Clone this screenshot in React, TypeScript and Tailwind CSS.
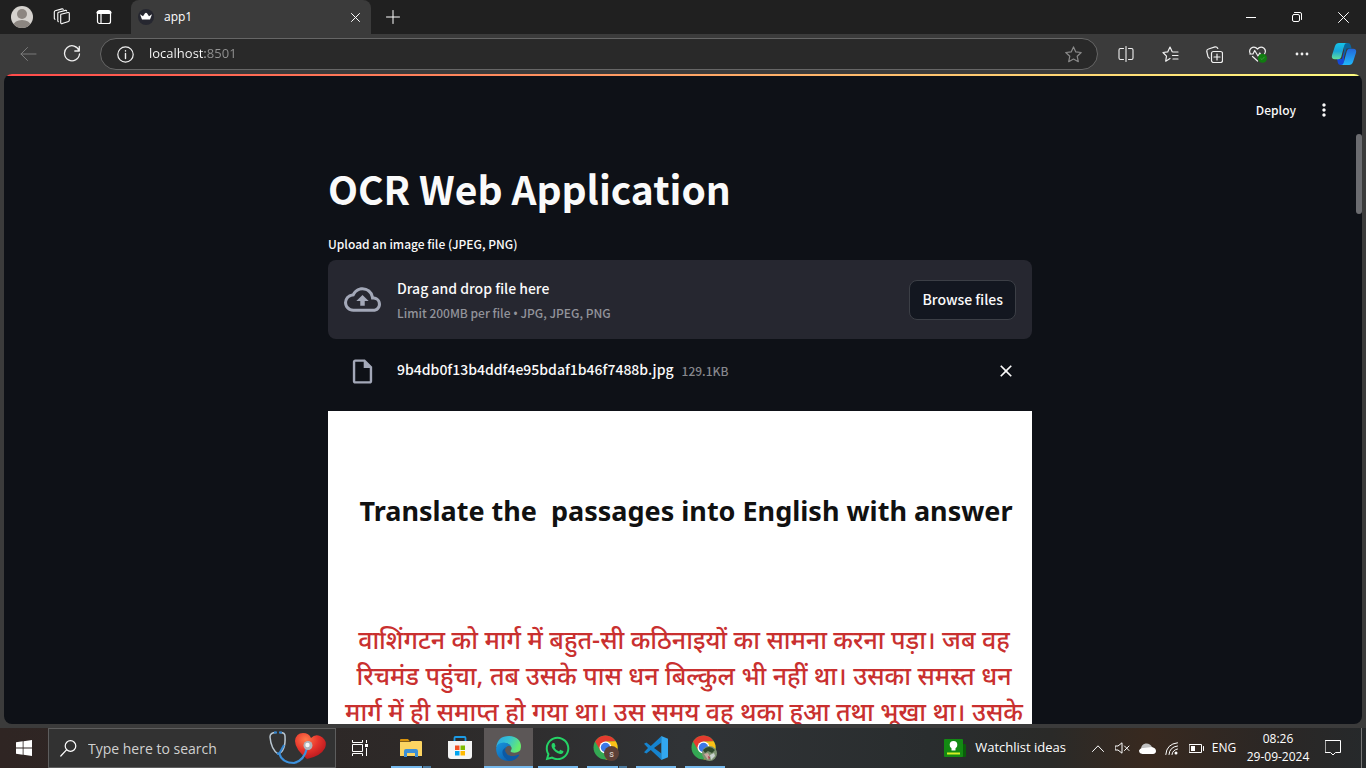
import { useRef, type ReactNode } from "react";
import { MdOutlineCloudUpload, MdOutlineInsertDriveFile, MdMoreVert, MdClose } from "react-icons/md";
import { FaWhatsapp } from "react-icons/fa";

const line = { fill: "none", stroke: "currentColor", strokeLinecap: "round", strokeLinejoin: "round" } as const;

function IconButton({ label, className, children }: { label: string; className: string; children: ReactNode }) {
  return (
    <button type="button" aria-label={label} className={`flex shrink-0 items-center justify-center ${className}`}>
      {children}
    </button>
  );
}

function TitleBar() {
  return (
    <header className="flex h-[34px] shrink-0 items-stretch bg-[#202020] text-white">
      <IconButton label="Profile" className="w-11">
        <svg width="24" height="24" viewBox="0 0 24 24">
          <defs>
            <clipPath id="face"><circle cx="12" cy="12" r="11" /></clipPath>
          </defs>
          <circle cx="12" cy="12" r="11" fill="#d5d2ce" />
          <g clipPath="url(#face)" fill="#8c8681">
            <circle cx="12" cy="9" r="5" />
            <ellipse cx="12" cy="20.500" rx="8.500" ry="5.500" />
          </g>
        </svg>
      </IconButton>
      <IconButton label="Workspaces" className="w-9">
        <svg width="18" height="18" viewBox="0 0 18 18" {...line} strokeWidth="1.100">
          <path d="M8 6.300l7-1.800q1.300-.2 1.300 1v6.800q0 .8-.8 1.100l-6.300 2.200q-1.500.4-1.500-1V7.300q0-.8.3-1z" />
          <path d="M5.300 13.700q-.5-.3-.5-1V5.400q0-.8.8-1.100l6.900-1.900q.9-.2 1.200.6" />
          <path d="M2 11.300q-.7-.3-.7-1.100V4q0-.9.9-1.200L9 .9q.9-.2 1.200.5" />
        </svg>
      </IconButton>
      <IconButton label="Tab actions" className="w-12">
        <svg width="16" height="16" viewBox="0 0 16 16" {...line} strokeWidth="1.200">
          <rect x="1.500" y="1.500" width="13" height="13" rx="2" />
          <path d="M2 3.500h12" strokeWidth="3" />
          <path d="M5 5v9" />
        </svg>
      </IconButton>
      <div role="tablist" className="ml-[3px] flex w-60 items-center rounded-t-lg bg-[#3b3b3b] pl-[7px] pr-2">
        <svg width="16" height="16" viewBox="0 0 16 16" className="shrink-0">
          <circle cx="8" cy="8" r="8" fill="#262730" />
          <path d="M2 5.200l3 2 2-3q1-1 2 0l2 3 3-2-2 5.300H4z" fill="#fff" />
        </svg>
        <button type="button" role="tab" aria-selected="true" className="flex-1 pl-[10px] text-left font-['Open_Sans',sans-serif] text-[12px]">app1</button>
        <IconButton label="Close tab" className="size-4">
          <svg width="9" height="9" viewBox="0 0 9 9" {...line}><path d="M.5.5l8 8M8.500.5l-8 8" /></svg>
        </IconButton>
      </div>
      <IconButton label="New tab" className="w-11">
        <svg width="14" height="14" viewBox="0 0 14 14" {...line}><path d="M7 .5v13M.5 7h13" /></svg>
      </IconButton>
      <div className="flex-1" />
      <IconButton label="Minimize" className="w-[46px]">
        <svg width="10" height="10" viewBox="0 0 10 10" {...line}><path d="M0 5.500h10" /></svg>
      </IconButton>
      <IconButton label="Restore" className="w-[46px]">
        <svg width="10" height="10" viewBox="0 0 10 10" {...line}>
          <rect x=".5" y="2.500" width="7" height="7" rx="1.500" />
          <path d="M2.500.5H8q1.500 0 1.500 1.500v5.500" />
        </svg>
      </IconButton>
      <IconButton label="Close window" className="w-[46px]">
        <svg width="11" height="11" viewBox="0 0 11 11" {...line}><path d="M.5.5l10 10M10.500.5l-10 10" /></svg>
      </IconButton>
    </header>
  );
}

function Toolbar() {
  return (
    <nav aria-label="Browser" className="flex h-10 shrink-0 items-center bg-[#3b3b3b] pr-[2px] text-[#f0f0f0]">
      <IconButton label="Back" className="ml-[6px] size-11 text-[#7b7b7b]">
        <svg width="17" height="16" viewBox="0 0 17 16" {...line}><path d="M16 8H1M7.500 1.500L1 8l6.500 6.500" /></svg>
      </IconButton>
      <IconButton label="Refresh" className="size-11">
        <svg width="18" height="18" viewBox="0 0 18 18" {...line} strokeWidth="1.300">
          <path d="M16.200 6A7.500 7.500 0 1 0 16.500 9M16.300 1.500V6h-4.500" />
        </svg>
      </IconButton>
      <div className="ml-[6px] flex h-8 flex-1 items-center rounded-full border border-[#666] bg-[#292929] pl-4 pr-4">
        <svg width="17" height="17" viewBox="0 0 17 17" {...line} strokeWidth="1.200" className="shrink-0">
          <circle cx="8.500" cy="8.500" r="7.700" />
          <path d="M8.500 7.500v5M8.500 4.800v.3" strokeWidth="1.400" />
        </svg>
        <input
          aria-label="Address"
          defaultValue="localhost:8501"
          className="ml-[15px] min-w-0 flex-1 bg-[linear-gradient(to_right,#ffffff_56px,#949494_56px)] bg-clip-text font-['Open_Sans',sans-serif] text-[13px] text-transparent outline-none"
        />
        <IconButton label="Add to favorites" className="size-4 text-[#8a8a8a]">
          <svg width="17" height="17" viewBox="0 0 17 17" {...line} strokeWidth="1.200" className="shrink-0">
            <path d="M8.500.9l2.300 5 5.400.6-4 3.700 1.100 5.500-4.800-2.700-4.800 2.700 1.100-5.500-4-3.700 5.400-.6z" />
          </svg>
        </IconButton>
      </div>
      <IconButton label="Split screen" className="ml-[6px] w-11">
        <svg width="16" height="16" viewBox="0 0 16 16" {...line} strokeWidth="1.100">
          <path d="M8 .5v15M5.500 2.500h-3Q1 2.500 1 4v8q0 1.500 1.500 1.500h3M10.500 2.500h3Q15 2.500 15 4v8q0 1.500-1.500 1.500h-3" />
        </svg>
      </IconButton>
      <IconButton label="Favorites" className="w-11">
        <svg width="17" height="17" viewBox="0 0 17 17" {...line} strokeWidth="1.200">
          <path d="M8 12.500l-4.300 2.700.8-5L1 6.500l4.700-.6L8 1l2.200 4.700M11 6h5M10.500 9.500H16M11 13h5" />
        </svg>
      </IconButton>
      <IconButton label="Collections" className="w-11">
        <svg width="17" height="17" viewBox="0 0 17 17" {...line} strokeWidth="1.200">
          <rect x="5.500" y="5.500" width="11" height="11" rx="2" />
          <path d="M11 8v6M8 11h6M3.500 12.200q-1.200-.2-1.500-1.500L.8 5.500Q.5 3.500 2.500 3L9 .9q2-.3 2.800 1.600" />
        </svg>
      </IconButton>
      <IconButton label="Browser essentials" className="w-11">
        <svg width="18" height="17" viewBox="0 0 18 17" {...line} strokeWidth="1.200">
          <path d="M1.500 8Q-.5 4.500 2 2.200 5.500-.5 8.500 3 11.500-.5 15 2.200 17.500 4.500 15.500 8M3.500 10.500l5 4.500M.8 8H4l1.700-3.500L9 10l1.800-3 1 1.500H15" />
          <circle cx="13.500" cy="12.300" r="4.500" fill="#107c10" stroke="none" />
          <path d="M11.800 12.500l1.200 1.100 2.300-2.500" stroke="#3e963e" strokeWidth="1" />
        </svg>
      </IconButton>
      <IconButton label="Settings and more" className="w-11">
        <svg width="14" height="4" viewBox="0 0 14 4" fill="currentColor">
          <circle cx="2" cy="2" r="1.400" /><circle cx="7" cy="2" r="1.400" /><circle cx="12" cy="2" r="1.400" />
        </svg>
      </IconButton>
      <IconButton label="Copilot" className="w-10">
        <svg width="26" height="24" viewBox="0 0 26 24">
          <defs>
            <linearGradient id="cpA" x1="0" y1="0" x2="0" y2="1"><stop stopColor="#14c4e8" /><stop offset=".5" stopColor="#1aa3d8" /><stop offset="1" stopColor="#62e09a" /></linearGradient>
            <linearGradient id="cpB" x1="0" y1="1" x2="0" y2="0"><stop stopColor="#20b8fa" /><stop offset="1" stopColor="#2366d9" /></linearGradient>
          </defs>
          <path d="M13 1h4q2 0 2.600 2l1 3.500h-5L13 15z" fill="#0b659b" />
          <path d="M13 23H9.500q-2 0-2.600-2L6 17h5l2-8z" fill="#1449d7" />
          <path d="M8 1h8q-2 0-2.600 2l-3.200 12q-.7 2.300-3 2.300H4q-4 0-3-4L4 4q1-3 4-3z" fill="url(#cpA)" />
          <path d="M18 23h-8q2 0 2.600-2l3.200-12q.7-2.300 3-2.300H22q4 0 3 4L22 20q-1 3-4 3z" fill="url(#cpB)" />
        </svg>
      </IconButton>
    </nav>
  );
}

function Uploader() {
  const picker = useRef<HTMLInputElement>(null);
  return (
    <section>
      <label htmlFor="image-upload" className="block text-[12px] leading-5">Upload an image file (JPEG, PNG)</label>
      <input ref={picker} id="image-upload" type="file" accept=".jpg,.jpeg,.png" className="sr-only" />
      <div className="mt-[6px] flex items-center rounded-lg bg-[#262730] p-4">
        <MdOutlineCloudUpload className="size-[37px] shrink-0 text-[#a3a8b8]" />
        <div className="ml-4 flex-1">
          <p className="text-[14px] leading-6">Drag and drop file here</p>
          <p className="mt-[3px] text-[12px] leading-5 text-[#92939a]">Limit 200MB per file <span className="font-['Noto_Sans',sans-serif] leading-none">•</span> JPG, JPEG, PNG</p>
        </div>
        <button type="button" onClick={() => picker.current?.click()} className="h-10 rounded-lg border border-[#3c3f46] bg-[#131720] px-3 text-[14px]">
          Browse files
        </button>
      </div>
      <div className="flex h-16 items-center pl-5 pr-4">
        <MdOutlineInsertDriveFile className="size-[29px] shrink-0 text-[#a3a8b8]" />
        <p className="ml-5 pb-1 text-[14px] leading-6">9b4db0f13b4ddf4e95bdaf1b46f7488b.jpg</p>
        <p className="ml-2 flex-1 text-[12px] text-[#86878c]">129.1KB</p>
        <IconButton label="Remove file" className="size-5"><MdClose className="size-5" /></IconButton>
      </div>
    </section>
  );
}

function Page() {
  return (
    <div className="relative mx-1 mb-1 flex min-h-0 flex-1 overflow-hidden rounded-lg bg-[#0e1117] font-['Noto_Sans_CJK_SC',sans-serif] font-medium text-[#fafafa]">
      <div className="absolute inset-x-0 top-0 h-[2px] bg-[linear-gradient(to_right,#ff4b4b,#fffd80)]" />
      <div className="flex min-w-0 flex-1 flex-col">
        <div className="flex h-15 shrink-0 items-end justify-end pr-[18px]">
          <div className="flex h-12 items-center gap-[14px]">
            <button type="button" className="text-[12px]">Deploy</button>
            <IconButton label="Main menu" className="size-7"><MdMoreVert className="size-5" /></IconButton>
          </div>
        </div>
        <main className="mx-auto w-full max-w-[704px] pt-6">
          <h1 className="text-[39px] font-bold leading-[60px]">OCR Web Application</h1>
          <div className="pt-4"><Uploader /></div>
          <figure className="mt-2 bg-white pl-2 pt-[80px] text-center">
            <p className="whitespace-pre pl-1 font-['Noto_Sans',sans-serif] text-[27px] font-bold leading-10 text-[#111]">Translate the  passages into English with answer</p>
            <p className="whitespace-nowrap pt-[90px] font-['Noto_Sans','Noto_Sans_Devanagari',sans-serif] text-[25px] leading-9 text-[#c9302f]">
              वाशिंगटन को मार्ग में बहुत-सी कठिनाइयों का सामना करना पड़ा। जब वह<br />
              रिचमंड पहुंचा, तब उसके पास धन बिल्कुल भी नहीं था। उसका समस्त धन<br />
              मार्ग में ही समाप्त हो गया था। उस समय वह थका हुआ तथा भूखा था। उसके
            </p>
          </figure>
        </main>
      </div>
      <div className="w-[6px] shrink-0 pt-15"><div className="h-20 rounded-full bg-[#6b6c70]" /></div>
    </div>
  );
}

function EdgeLogo() {
  return (
    <svg width="25" height="25" viewBox="0 0 24 24">
      <defs>
        <linearGradient id="edTop" x1="0" y1="0" x2="1" y2=".4"><stop stopColor="#2aa6e4" /><stop offset=".5" stopColor="#35c1d4" /><stop offset="1" stopColor="#66eb6e" /></linearGradient>
        <linearGradient id="edLow" x1="0" y1="0" x2="1" y2="1"><stop stopColor="#1795dd" /><stop offset="1" stopColor="#0b4fa0" /></linearGradient>
      </defs>
      <path d="M.2 11Q1.500 0 12.500 0 24 .8 24 10.500q-.3 5.500-6.300 5.500-5 0-3.200-2.500 1.300-2-.5-4Q11 6 6.500 7 2 8 .2 11z" fill="url(#edTop)" />
      <path d="M.1 12Q1 6.300 7.500 6.200q5 .2 7 3.800-2.500-1.500-4.500.5-3.500 4 1 7.500 5 3 10.500.1.900-.4.600.5Q18.500 24 12 24 .3 23.300.1 12z" fill="url(#edLow)" />
      <path d="M9.800 10.500Q3.500 14 8 20.500q2 2.700 5 3.300 6-.4 9.200-5.500.1-.7-.6-.3-5.600 2.900-10.600-.1-4-3.400-1.200-7.400z" fill="#0c59a4" />
    </svg>
  );
}

function ChromeLogo({ badge }: { badge: ReactNode }) {
  return (
    <svg width="27" height="27" viewBox="0 0 27 27">
      <circle cx="12.500" cy="12.500" r="12" fill="#34a853" />
      <path d="M2.100 6.500A12 12 0 0 1 22.900 6.500H12.500L7.300 15.500z" fill="#e33b2e" />
      <path d="M22.900 6.500A12 12 0 0 1 12.500 24.500L17.700 15.500 17 7z" fill="#fbc116" />
      <path d="M12.500 6.500h10.400l-5 3z" fill="#fbc116" />
      <circle cx="12.500" cy="12.500" r="6" fill="#fff" />
      <circle cx="12.500" cy="12.500" r="4.700" fill="#3b78e7" />
      {badge}
    </svg>
  );
}

function TaskApp({ label, active, bar = "none", children }: { label: string; active?: boolean; bar?: "none" | "single" | "stack" | "full"; children: ReactNode }) {
  return (
    <button type="button" aria-label={label} className={`flex w-[49px] flex-col items-center ${active ? "bg-[#5c5757]" : ""}`}>
      <span className="flex flex-1 items-center pt-[2px]">{children}</span>
      {bar === "none" && <span className="h-[2px]" />}
      {bar === "full" && <span className="h-[2px] w-full bg-[#76b9ed]" />}
      {bar === "single" && <span className="h-[2px] w-10 bg-[#76b9ed]" />}
      {bar === "stack" && <span className="flex h-[2px] w-10 gap-px"><span className="flex-1 bg-[#76b9ed]" /><span className="w-2 bg-[#4c7ba0]" /></span>}
    </button>
  );
}

function Taskbar() {
  return (
    <footer className="flex h-10 shrink-0 items-stretch bg-[linear-gradient(to_right,#2f2523,#2d2928_30%,#303336_50%,#292d2e_68%,#2a2a28_77%,#38291f_84%,#2b2725_93%,#26292b)] font-['Open_Sans',sans-serif] text-white">
      <IconButton label="Start" className="w-12">
        <svg width="16" height="16" viewBox="0 0 16 16" fill="#fff"><path d="M0 2.200L6.700 1.300V7.600H0zM7.500 1.200L16 0v7.600H7.500zM0 8.400h6.700v6.300L0 13.800zM7.500 8.400H16V16l-8.500-1.200z" /></svg>
      </IconButton>
      <div className="flex w-72 items-center border border-[#5d5d5d] bg-[#323232] pl-[11px] pr-2">
        <svg width="17" height="17" viewBox="0 0 17 17" {...line} strokeWidth="1.200" className="shrink-0"><circle cx="10.500" cy="6" r="5.300" /><path d="M6.500 9.800L.8 16" /></svg>
        <input type="search" aria-label="Search" placeholder="Type here to search" className="ml-[11px] min-w-0 flex-1 text-[14px] outline-none placeholder:text-[#d0d0d0]" />
        <svg width="58" height="34" viewBox="0 0 58 34" fill="none" className="shrink-0">
          <defs><radialGradient id="heart" cx=".35" cy=".25" r=".8"><stop stopColor="#ff7a4a" /><stop offset=".5" stopColor="#e7352c" /><stop offset="1" stopColor="#b3151d" /></radialGradient></defs>
          <path d="M38 28Q26 18 26 10 27 2 34 2q6 0 8 5 4-4 9-2 8 4 5 12-4 8-18 11z" fill="url(#heart)" />
          <path d="M7 1.500Q1 1.500 1 6q1 12 8 17 8-3 7-18 0-3.500-5-3.500" stroke="#b9c6d0" strokeWidth="1.500" />
          <path d="M5 1.500h3M10 1.500h3M8 22l2 1 5-9" stroke="#3285d0" strokeWidth="2" />
          <path d="M10 22q3 10 15 10 10-2 13-15" stroke="#3c91dd" strokeWidth="2.200" />
          <circle cx="39" cy="14.500" r="4.500" fill="#aeb4ba" /><circle cx="38.500" cy="14" r="2.200" fill="#f6f6f6" />
        </svg>
      </div>
      <IconButton label="Task view" className="w-12">
        <svg width="17" height="16" viewBox="0 0 17 16" {...line} strokeLinecap="butt"><path d="M.5 0v2.500h10V0M.5 16v-2.500h10V16M.5 4.500h10v7H.5zM14.500 0v3M14.500 8v8" /><rect x="13" y="4" width="3" height="3" fill="#fff" stroke="none" /></svg>
      </IconButton>
      <div className="ml-[2px] flex">
        <TaskApp label="File Explorer" bar="stack">
          <svg width="22" height="19" viewBox="0 0 22 19"><path d="M0 1q0-1 1-1h7l2 2.500H0z" fill="#d9930c" /><path d="M0 3h10l1.500-1H21q1 0 1 1v14H0z" fill="#fcd462" /><path d="M4 18v-6q0-2 2-2h10q2 0 2 2v6h-3v-4H7v4z" fill="#3d8fd6" /></svg>
        </TaskApp>
        <TaskApp label="Microsoft Store">
          <svg width="24" height="24" viewBox="0 0 24 24"><path d="M6.500 6V2q0-1 1-1h9q1 0 1 1v4" fill="none" stroke="#1c9be6" strokeWidth="1.800" /><path d="M0 5h24v15q0 3-3 3H3q-3 0-3-3z" fill="#f4f4f4" /><path d="M7 9.500h4.500V14H7z" fill="#f25022" /><path d="M12.500 9.500H17V14h-4.500z" fill="#7fba00" /><path d="M7 15h4.500v4.500H7z" fill="#00a4ef" /><path d="M12.500 15H17v4.500h-4.500z" fill="#ffb900" /></svg>
        </TaskApp>
        <TaskApp label="Microsoft Edge" active bar="full"><EdgeLogo /></TaskApp>
        <TaskApp label="WhatsApp" bar="single"><FaWhatsapp className="size-[27px] text-[#25d366]" /></TaskApp>
        <TaskApp label="Chrome, profile s" bar="stack">
          <ChromeLogo badge={<><circle cx="18.500" cy="18.500" r="7.500" fill="#5d4037" /><text x="18.500" y="22" textAnchor="middle" fontSize="9" fontFamily="Roboto" fill="#e8e2e0">s</text></>} />
        </TaskApp>
        <TaskApp label="Visual Studio Code" bar="single">
          <svg width="24" height="24" viewBox="0 0 24 24"><path d="M17.500 0L6.800 10 2.400 6.600 0 7.700l4 4.300-4 4.300 2.400 1.100L6.800 14l10.700 10V17.500L10 12l7.500-5.500z" fill="#1684cf" /><path d="M17.300 0L24 2.800v18.400L17.300 24z" fill="#32a7f0" /></svg>
        </TaskApp>
        <TaskApp label="Chrome, second profile" bar="single">
          <ChromeLogo badge={<><circle cx="18.500" cy="18.500" r="7.500" fill="#7c9271" /><path d="M12 15q6-6 12 0l-3 3-4-2-3 2z" fill="#2e4a2c" /><path d="M13 19l4-1 2 4-2 3z" fill="#c9a7a0" /><path d="M19 20l4-2 1 3-4 4z" fill="#c9d3cf" /><path d="M17 21l2 1-1 3z" fill="#a63342" /></>} />
        </TaskApp>
      </div>
      <div className="flex-1" />
      <button type="button" className="mr-5 flex items-center gap-[9px] text-[13px]">
        <svg width="22" height="18" viewBox="0 0 22 18"><rect x="15" y="5" width="7" height="13" rx="1" fill="#0a5f0a" /><rect width="19" height="18" rx="1" fill="#138a13" /><circle cx="9.500" cy="5.800" r="3.800" fill="#fff" /><path d="M7.500 8h4v3.500h-4z" fill="#fff" /><path d="M3 14.500h13" stroke="#d4ef24" strokeWidth="2" /></svg>
        Watchlist ideas
      </button>
      <IconButton label="Show hidden icons" className="w-6"><svg width="12" height="7" viewBox="0 0 12 7" {...line}><path d="M.5 6.500L6 .8l5.500 5.700" /></svg></IconButton>
      <IconButton label="Volume muted" className="w-6"><svg width="15" height="12" viewBox="0 0 15 12" {...line}><path d="M.5 4h2.500L7 .8v10.400L3 8H.5zM9.500 4l4.500 4.500M14 4L9.500 8.500" /></svg></IconButton>
      <IconButton label="OneDrive" className="w-[26px]"><svg width="17" height="11" viewBox="0 0 17 11"><path d="M2 6Q2 1.500 6.500.5 11 0 13 4L8 8z" fill="#c2c2c2" /><path d="M3.500 11Q0 10.500 0 7.500 1 4.500 4.500 5L13 4q4 1 4 4 0 2.500-3 3z" fill="#fff" /></svg></IconButton>
      <IconButton label="Wi-Fi" className="w-6"><svg width="14" height="13" viewBox="0 0 14 13" {...line}><path d="M.8 12.500Q1.500 2 12.500.8M4 12.500Q4.500 5 12.500 4M7 12.500Q7.500 8 12.500 7" /><circle cx="11" cy="11" r="1.500" fill="#fff" stroke="none" /></svg></IconButton>
      <IconButton label="Battery" className="w-6"><svg width="15" height="9" viewBox="0 0 15 9" {...line} strokeLinejoin="miter"><path d="M.5.5h12v8H.5zM14.500 2.500v4" /><path d="M2 2h4v5H2z" fill="#fff" stroke="none" /></svg></IconButton>
      <button type="button" className="w-8 text-[12px]">ENG</button>
      <button type="button" className="w-[76px] text-center text-[12px] leading-[18px]">08:26<br />29-09-2024</button>
      <IconButton label="Notifications" className="w-[34px]"><svg width="17" height="16" viewBox="0 0 17 16" {...line} strokeLinejoin="miter"><path d="M.5.5h15v12h-5L8 15l-2.500-2.500h-5z" /></svg></IconButton>
      <button type="button" aria-label="Show desktop" className="ml-[11px] w-[5px] border-l border-[#777]" />
    </footer>
  );
}

export default function App() {
  return (
    <div className="flex h-screen flex-col overflow-hidden bg-[#3b3b3b]">
      <TitleBar />
      <Toolbar />
      <Page />
      <Taskbar />
    </div>
  );
}
